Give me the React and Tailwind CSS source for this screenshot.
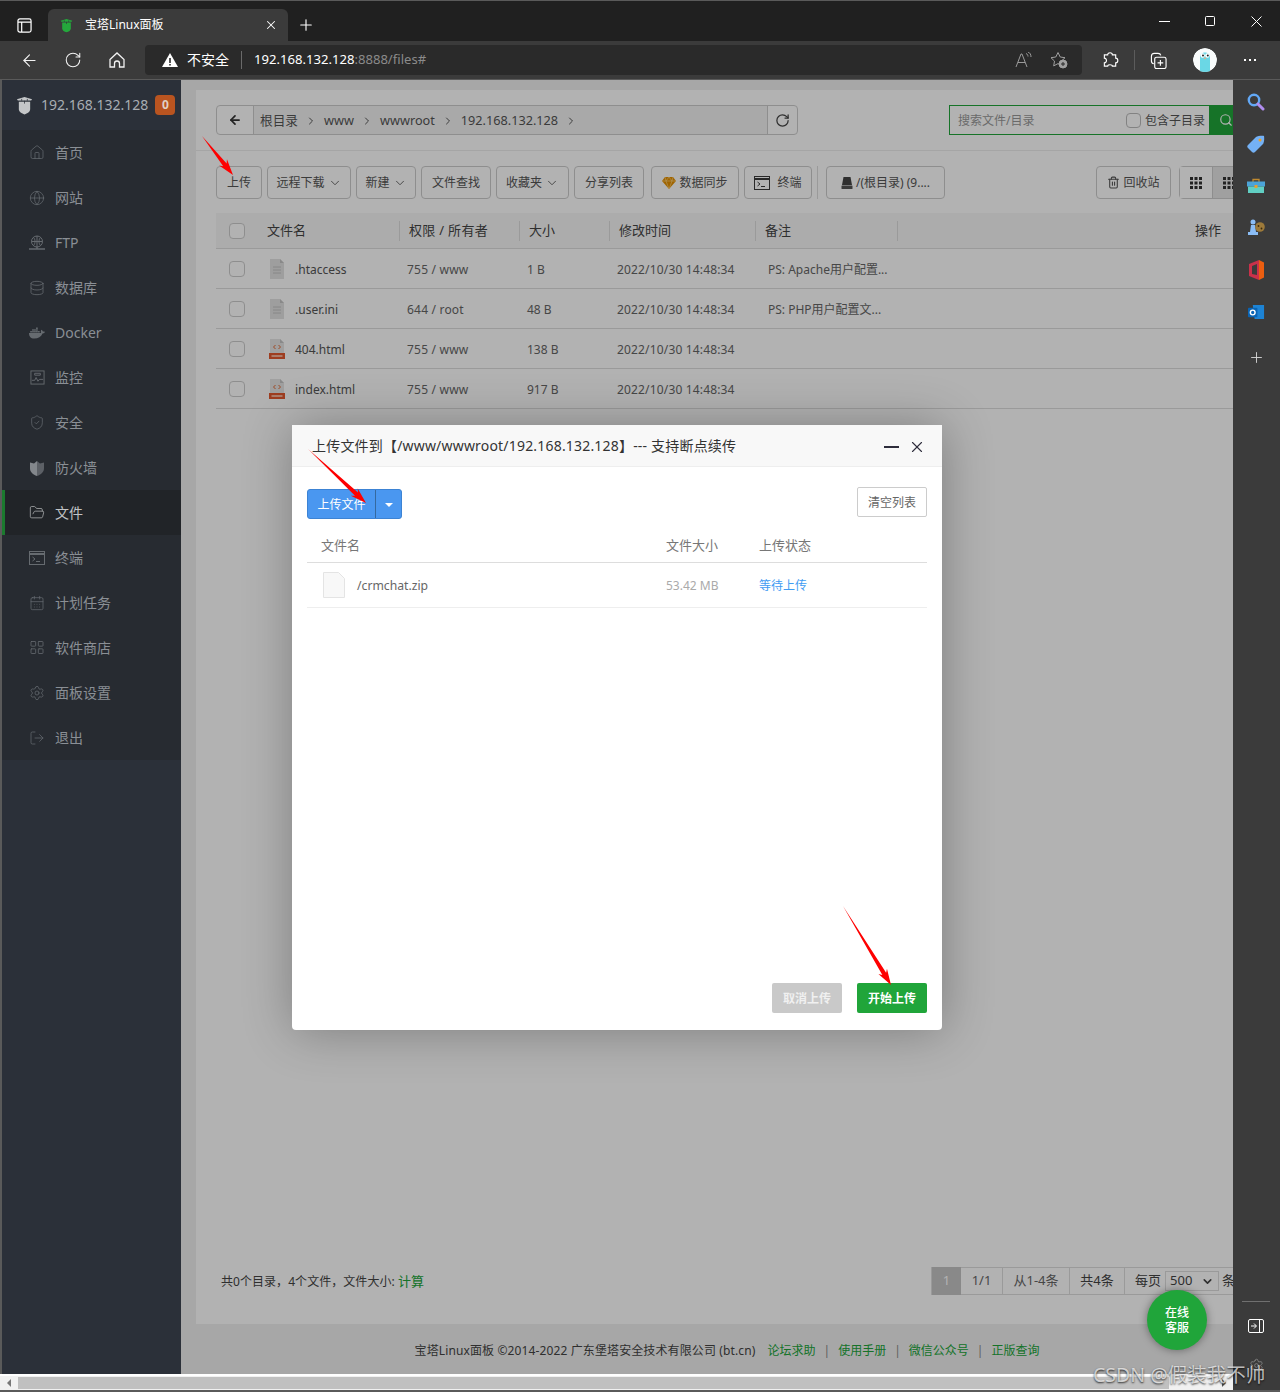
import {
  ArrowLeft,
  CalendarDays,
  ChevronDown,
  ChevronRight,
  Database,
  FolderOpen,
  Globe,
  Home,
  LayoutGrid,
  LogOut,
  Plus,
  RotateCw,
  Search,
  Settings,
  ShieldCheck,
  Trash2,
  X,
} from "lucide-react";
import { FaDocker } from "react-icons/fa";

/* small drawn icons */
const BtLogo = ({ className, color = "#c4c6c8" }) => (
  <svg viewBox="0 0 18 20" className={className}>
    <path d="M1 3.500 9 1l8 2.500-1 1.200H2z" fill={color} />
    <path d="M3 6h12v8c0 2.500-3 4.500-6 5.500-3-1-6-3-6-5.500z" fill={color} />
    <path d="M9 5v3M6 3v2M12 3v2" stroke="#2b3038" strokeWidth="0.8" />
  </svg>
);

const FtpIcon = () => (
  <svg viewBox="0 0 16 16" className="w-4 h-4" fill="none" stroke="currentColor" strokeWidth="1">
    <circle cx="8" cy="6.500" r="5.500" />
    <path d="M2.500 6.500h11M8 1v11M4.500 2.500c2 2 2 6 0 8M11.500 2.500c-2 2-2 6 0 8" />
    <path d="M0 14h16M8 12v2" strokeWidth="1.400" />
  </svg>
);

const MonitorIcon = () => (
  <svg viewBox="0 0 16 16" className="w-[15px] h-[15px]" fill="none" stroke="currentColor" strokeWidth="1">
    <rect x="1" y="1" width="14" height="14" />
    <path d="M2 11h3l1.500-3 2 4 1.500-2h4M5 3.500h6v2H5z" />
  </svg>
);

const FirewallIcon = () => (
  <svg viewBox="0 0 16 16" className="w-4 h-4">
    <path d="M1 2.500 5 3.500 8 1v15c-4-1.500-7-4-7-7.500z" fill="#83878c" />
    <path d="M15 2.500 11 3.500 8 1v15c4-1.500 7-4 7-7.500z" fill="#5c6066" />
  </svg>
);

const TerminalIcon = ({ className = "w-4 h-4" }) => (
  <svg viewBox="0 0 16 14" className={className} fill="none" stroke="currentColor">
    <rect x="0.500" y="0.500" width="15" height="13" />
    <path d="M1 3h14" strokeWidth="2" />
    <path d="M3.500 6 6 8 3.500 10M7 10.500h4" strokeWidth="1" />
  </svg>
);

const DocIcon = ({ html }) => (
  <svg viewBox="0 0 16 20" className="w-4 h-5">
    <path d="M1 0h10l4 4v16H1z" fill={html ? "#e6e6e6" : "#e3e3e3"} />
    <path d="M11 0l4 4h-4z" fill="#c5c5c5" />
    {html ? (
      <>
        <path d="M6.500 6 4.500 8l2 2M9.500 6l2 2-2 2" fill="none" stroke="#e36a35" strokeWidth="1" />
        <rect x="0" y="14" width="16" height="6" fill="#e3582e" />
        <rect x="2.500" y="16.300" width="11" height="1.400" fill="#ffd9c8" />
      </>
    ) : (
      <path d="M4 8h8M4 11h8M4 14h8" stroke="#c2c2c2" strokeWidth="1" />
    )}
  </svg>
);

const Diamond = () => (
  <svg viewBox="0 0 14 12" className="w-[14px] h-3">
    <path d="M3 0h8l3 4-7 8-7-8z" fill="#e49000" />
    <path d="M0 4h14M4 4l3 8 3-8M3 0l1 4 3-4 3 4 1-4" fill="none" stroke="#ffd27c" strokeWidth="0.7" />
  </svg>
);

const Gopher = () => (
  <svg viewBox="0 0 24 24" className="w-6 h-6 rounded-full">
    <circle cx="12" cy="12" r="12" fill="#f8fbfb" />
    <path d="M7 9c0-6 10-6 10 0v15H7z" fill="#6ad7e5" />
    <circle cx="9.600" cy="7.500" r="2.200" fill="#fff" />
    <circle cx="14.400" cy="7.500" r="2.200" fill="#fff" />
    <circle cx="10" cy="7.500" r="1" fill="#222" />
    <circle cx="14.800" cy="7.500" r="1" fill="#222" />
    <ellipse cx="12" cy="10.400" rx="1.200" ry="0.800" fill="#d6b28a" />
  </svg>
);

// the red arrows drawn over the screenshot
const Arrow = ({ from, to }) => {
  const dx = to[0] - from[0];
  const dy = to[1] - from[1];
  const len = Math.hypot(dx, dy);
  const ux = dx / len;
  const uy = dy / len;
  const at = (back, side) => `${to[0] - ux * back + uy * side},${to[1] - uy * back - ux * side}`;
  const points = [`${from[0]},${from[1]}`, at(13, 2.2), at(16, 5), to.join(","), at(16, -5), at(13, -2.2)].join(" ");
  return <polygon points={points} fill="#fe0000" />;
};

const menu = [
  { name: "首页", icon: <Home size={17} strokeWidth={1.1} /> },
  { name: "网站", icon: <Globe size={16} strokeWidth={1.1} /> },
  { name: "FTP", icon: <FtpIcon /> },
  { name: "数据库", icon: <Database size={16} strokeWidth={1.2} /> },
  { name: "Docker", icon: <FaDocker size={16} /> },
  { name: "监控", icon: <MonitorIcon /> },
  { name: "安全", icon: <ShieldCheck size={17} strokeWidth={1.1} /> },
  { name: "防火墙", icon: <FirewallIcon /> },
  { name: "文件", icon: <FolderOpen size={17} strokeWidth={1.1} />, active: true },
  { name: "终端", icon: <TerminalIcon /> },
  { name: "计划任务", icon: <CalendarDays size={16} strokeWidth={1.1} /> },
  { name: "软件商店", icon: <LayoutGrid size={17} strokeWidth={1.2} /> },
  { name: "面板设置", icon: <Settings size={16} strokeWidth={1.1} /> },
  { name: "退出", icon: <LogOut size={16} strokeWidth={1.1} /> },
];

const files = [
  { name: ".htaccess", perm: "755 / www", size: "1 B", note: "PS: Apache用户配置..." },
  { name: ".user.ini", perm: "644 / root", size: "48 B", note: "PS: PHP用户配置文..." },
  { name: "404.html", perm: "755 / www", size: "138 B", html: true },
  { name: "index.html", perm: "755 / www", size: "917 B", html: true },
];

const Sidebar = () => (
  <aside className="w-[181px] shrink-0 bg-[#2b3039] flex flex-col border-l-2 border-[#5a5a5a]">
    <div className="h-[50px] flex items-center pl-[14px] text-[#a8adb3]">
      <BtLogo className="w-[17px] h-[19px] mr-2" />
      <span className="text-[14px] pb-[2px]">192.168.132.128</span>
      <span className="ml-[7px] w-5 h-5 rounded bg-[#b95420] text-[12px] font-bold text-[#e0d0c5] flex items-center justify-center">
        0
      </span>
    </div>
    <nav className="bg-[#272b31]">
      {menu.map((m) => (
        <div
          key={m.name}
          className={
            m.active
              ? "h-[45px] flex items-center pl-[24px] text-[14px] bg-[#212428] text-[#c2c4c6] border-l-[3px] border-[#1b7a2e]"
              : "h-[45px] flex items-center pl-[27px] text-[14px] text-[#8a8f95]"
          }
        >
          <span className={m.active ? "w-4 flex justify-center mr-[10px] text-[#b4b6b8]" : "w-4 flex justify-center mr-[10px] text-[#666b70]"}>
            {m.icon}
          </span>
          {m.name}
        </div>
      ))}
    </nav>
  </aside>
);

const ToolButton = ({ children, width, className = "" }) => (
  <div
    style={{ width }}
    className={`h-[33px] shrink-0 bg-white border border-[#ccc] rounded-sm flex items-center justify-center gap-[3px] text-[12px] text-[#555] ${className}`}
  >
    {children}
  </div>
);

const FileTable = () => (
  <div className="mt-[14px] text-[#666]">
    <div className="h-[36px] bg-[#f6f6f6] border-b border-[#ddd] grid grid-cols-[183px_120px_90px_146px_142px_1fr] items-center text-[13px] text-[#444]">
      <div className="flex items-center pl-[13px]">
        <span className="w-4 h-4 bg-white border border-[#ccc] rounded-sm" />
        <span className="ml-[22px]">文件名</span>
      </div>
      <div className="h-5 border-l border-[#ddd] pl-[9px] flex items-center tracking-[0.3px]">权限 / 所有者</div>
      <div className="h-5 border-l border-[#ddd] pl-[9px] flex items-center">大小</div>
      <div className="h-5 border-l border-[#ddd] pl-[9px] flex items-center">修改时间</div>
      <div className="h-5 border-l border-[#ddd] pl-[9px] flex items-center">备注</div>
      <div className="h-5 border-l border-[#ddd] pr-[32px] flex items-center justify-end">操作</div>
    </div>
    {files.map((f) => (
      <div
        key={f.name}
        className="h-10 border-b border-[#ddd] grid grid-cols-[183px_120px_90px_146px_142px_1fr] items-center text-[12px]"
      >
        <div className="flex items-center pl-[13px]">
          <span className="w-4 h-4 bg-white border border-[#ccc] rounded-sm" />
          <span className="ml-[24px] mr-[10px] flex">
            <DocIcon html={f.html} />
          </span>
          <span className="text-[#555] pt-[2px]">{f.name}</span>
        </div>
        <div className="pl-2 pt-[2px] tracking-[0.2px]">{f.perm}</div>
        <div className="pl-2 pt-[2px]">{f.size}</div>
        <div className="pl-2 pt-[2px] tracking-[0.16px]">2022/10/30 14:48:34</div>
        <div className="pl-[13px] pt-[2px]">{f.note}</div>
      </div>
    ))}
  </div>
);

const Toolbar = () => (
  <div className="mt-[15px] flex items-center gap-[5px]">
    <ToolButton width={46}>上传</ToolButton>
    <ToolButton width={84}>
      远程下载
      <ChevronDown size={14} strokeWidth={1.5} />
    </ToolButton>
    <ToolButton width={60}>
      新建
      <ChevronDown size={14} strokeWidth={1.5} />
    </ToolButton>
    <ToolButton width={70}>文件查找</ToolButton>
    <ToolButton width={73}>
      收藏夹
      <ChevronDown size={14} strokeWidth={1.5} />
    </ToolButton>
    <ToolButton width={70}>分享列表</ToolButton>
    <ToolButton width={88} className="ml-[2px]">
      <Diamond />
      数据同步
    </ToolButton>
    <ToolButton width={68}>
      <span className="text-[#3c3c3c] mr-1 flex">
        <TerminalIcon />
      </span>
      终端
    </ToolButton>
    <div className="w-px h-[33px] bg-[#ddd]" />
    <ToolButton width={119} className="ml-[3px]">
      <svg viewBox="0 0 12 12" className="w-3 h-3">
        <path d="M2.500 0h7L11 8H1z" fill="#444" />
        <rect x="0.500" y="8.500" width="11" height="3.500" rx="0.500" fill="#555" />
      </svg>
      /(根目录) (9....
    </ToolButton>
    <div className="flex-1" />
    <ToolButton width={75}>
      <Trash2 size={13} />
      回收站
    </ToolButton>
    <div className="ml-[3px] mr-[8px] flex h-[33px] border border-[#ccc] rounded-sm shrink-0">
      <div className="w-[32px] bg-white flex items-center justify-center text-[#333]">
        <svg viewBox="0 0 12 12" className="w-3 h-3" fill="currentColor">
          <path d="M0 0h3v3H0zM4.500 0h3v3h-3zM9 0h3v3H9zM0 4.500h3v3H0zM4.500 4.500h3v3h-3zM9 4.500h3v3H9zM0 9h3v3H0zM4.500 9h3v3h-3zM9 9h3v3H9z" />
        </svg>
      </div>
      <div className="w-[32px] bg-[#e6e6e6] border-l border-[#ccc] flex items-center justify-center text-[#333]">
        <svg viewBox="0 0 12 12" className="w-3 h-3" fill="currentColor">
          <path d="M0 0h3v3H0zM4.500 0h3v3h-3zM9 0h3v3H9zM0 4.500h3v3H0zM4.500 4.500h3v3h-3zM9 4.500h3v3H9zM0 9h3v3H0zM4.500 9h3v3h-3zM9 9h3v3H9z" />
        </svg>
      </div>
    </div>
  </div>
);

const PathBar = () => (
  <div className="flex items-center justify-between pr-[3px]">
    <div className="w-[582px] h-[30px] flex bg-white border border-[#ccc] rounded-sm text-[12.700px] text-[#555]">
      <div className="w-[37px] flex items-center justify-center border-r border-[#ccc] text-[#333]">
        <ArrowLeft size={14} strokeWidth={3} />
      </div>
      <div className="flex-1 bg-[#f3f3f3] flex items-center pl-[6px] pt-px">
        根目录
        <ChevronRight size={12} className="mx-[7px]" />
        www
        <ChevronRight size={12} className="mx-[7px]" />
        wwwroot
        <ChevronRight size={12} className="mx-[7px]" />
        192.168.132.128
        <ChevronRight size={12} className="mx-[7px]" />
      </div>
      <div className="w-[30px] border-l border-[#ccc] flex items-center justify-center text-[#444]">
        <RotateCw size={15} />
      </div>
    </div>
    <div className="w-[301px] h-[30px] flex border border-[#20a53a] bg-white text-[12px] overflow-hidden">
      <div className="flex-1 flex items-center pl-2 pt-px text-[#999]">搜索文件/目录</div>
      <div className="flex items-center text-[#555] pr-1 pt-px">
        <span className="w-[15px] h-[15px] border border-[#bbb] rounded-sm mr-1" />
        包含子目录
      </div>
      <div className="w-10 bg-[#20a53a] flex items-center pl-[10px] text-white">
        <Search size={14} />
      </div>
    </div>
  </div>
);

const Pager = () => (
  <div className="h-[28px] flex text-[13px] text-[#666] border border-[#ddd] bg-white">
    <div className="w-[29px] bg-[#c4c4c4] text-white flex items-center justify-center -my-px">1</div>
    <div className="w-[42px] border-r border-[#ddd] flex items-center justify-center">1/1</div>
    <div className="w-[67px] border-r border-[#ddd] flex items-center justify-center">从1-4条</div>
    <div className="w-[55px] border-r border-[#ddd] flex items-center justify-center text-[#444]">共4条</div>
    <div className="flex items-center pl-[10px] text-[#444]">
      每页
      <div className="ml-[4px] w-[54px] h-[20px] border border-[#ddd] flex items-center justify-between pl-1 pr-1">
        500
        <ChevronDown size={13} strokeWidth={3} />
      </div>
      <span className="ml-[3px] mr-1">条</span>
    </div>
  </div>
);

const UploadDialog = () => (
  <div className="absolute left-[111px] top-[345px] w-[650px] h-[605px] bg-white rounded-sm shadow-[1px_1px_50px_rgba(0,0,0,0.3)] flex flex-col">
    <div className="h-[42px] bg-[#f8f8f8] border-b border-[#eee] flex items-center pl-[20px] pr-[16px] text-[14px] text-[#333]">
      <span className="flex-1 tracking-[0.19px]">上传文件到【/www/wwwroot/192.168.132.128】--- 支持断点续传</span>
      <span className="w-[15px] h-[2px] bg-[#2e2d3c] mt-[3px] mr-[9px]" />
      <X size={18} strokeWidth={1.5} className="text-[#2e2d3c] mt-[2px]" />
    </div>
    <div className="flex-1 px-[15px] flex flex-col">
      <div className="flex justify-between mt-[20px]">
        <div className="mt-[2px] w-[95px] h-[30px] bg-[#4a97f0] border border-[#3c83d4] rounded-[3px] flex text-white text-[12px]">
          <div className="w-[68px] flex items-center justify-center pt-[2px] border-r border-[#35699f]">上传文件</div>
          <div className="flex-1 flex items-center justify-center">
            <span className="border-x-[4px] border-t-[4px] border-x-transparent border-t-white mt-[2px]" />
          </div>
        </div>
        <div className="w-[70px] h-[30px] border border-[#ccc] rounded-[2px] flex items-center justify-center pt-[2px] text-[12px] text-[#666]">
          清空列表
        </div>
      </div>
      <div className="mt-[11px] h-[33px] border-b border-[#ddd] flex items-center text-[13px] text-[#777]">
        <span className="ml-[14px] w-[345px]">文件名</span>
        <span className="w-[93px]">文件大小</span>
        <span>上传状态</span>
      </div>
      <div className="h-[45px] border-b border-[#eee] flex items-center">
        <svg viewBox="0 0 22 26" className="ml-[16px] w-[22px] h-[26px]">
          <path d="M.5.500h15l6 6v19H.5z" fill="#f8f8f8" stroke="#e4e4e4" />
        </svg>
        <span className="ml-[12px] w-[309px] pt-[2px] text-[12.200px] text-[#666]">/crmchat.zip</span>
        <span className="w-[93px] pt-[2px] text-[12px] text-[#aaa]">53.42 MB</span>
        <span className="pt-[2px] text-[12px] text-[#3f9cf2]">等待上传</span>
      </div>
      <div className="flex-1" />
      <div className="flex justify-end gap-[15px] mb-[17px] text-[12px] font-bold text-white">
        <div className="w-[70px] h-[30px] pt-[2px] bg-[#c9c9c9] text-[#f0f0f0] rounded-[2px] flex items-center justify-center">取消上传</div>
        <div className="w-[70px] h-[30px] pt-[2px] bg-[#20a53a] rounded-[2px] flex items-center justify-center">开始上传</div>
      </div>
    </div>
  </div>
);

const Main = () => (
  <main className="w-[1052px] shrink-0 relative overflow-hidden bg-[#f0f0f0]">
    <div className="w-[1092px] pl-[15px] pt-[10px]">
      <div className="h-[1234px] bg-white px-5 pt-[15px] flex flex-col">
        <PathBar />
        <div className="h-px bg-[#ececec] -mx-5 mt-[15px]" />
        <Toolbar />
        <FileTable />
        <div className="flex-1" />
        <div className="flex items-center justify-between mb-[29px]">
          <span className="text-[12px] text-[#444] pl-[5px] pt-[2px] tracking-[0.05px]">
            共0个目录，4个文件，文件大小: <span className="text-[#20a53a] text-[13px]">计算</span>
          </span>
          <div className="w-[322px] overflow-hidden">
            <Pager />
          </div>
        </div>
      </div>
      <div className="mt-[18px] text-center text-[12px] text-[#444] -ml-[15px]">
        <span className="tracking-[0.12px]">宝塔Linux面板 ©2014-2022 广东堡塔安全技术有限公司 (bt.cn)</span>
        <span className="text-[#20a53a] ml-[12px]">论坛求助</span>
        <span className="mx-[8px] text-[#888]">|</span>
        <span className="text-[#20a53a]">使用手册</span>
        <span className="mx-[8px] text-[#888]">|</span>
        <span className="text-[#20a53a]">微信公众号</span>
        <span className="mx-[8px] text-[#888]">|</span>
        <span className="text-[#20a53a]">正版查询</span>
      </div>
    </div>
    <div className="absolute inset-0 bg-black/30" />
    <UploadDialog />
    <div className="absolute left-[966px] top-[1210px] w-[60px] h-[60px] rounded-full bg-[#20a53a] shadow-[0_0_8px_rgba(0,0,0,0.4)] text-white text-[12px] font-medium leading-[15px] flex items-center justify-center text-center">
      在线
      <br />
      客服
    </div>
  </main>
);

const EdgeSidebar = () => (
  <aside className="flex-1 bg-[#3b3b3b] flex flex-col items-center pt-[13px] pr-px">
    <svg viewBox="0 0 18 18" className="w-[18px] h-[18px]">
      <circle cx="7" cy="7" r="5.200" fill="none" stroke="#62a8f5" strokeWidth="2.400" />
      <path d="M11 11l5 5" stroke="#b18df0" strokeWidth="3" strokeLinecap="round" />
    </svg>
    <svg viewBox="0 0 18 18" className="w-[18px] h-[18px] mt-6">
      <path d="M1 10 9 2c1-1 7-1.500 8-1 .5 2 0 7-1 8l-8 8c-1 1-2 1-3 0l-4-4c-1-1-1-2 0-3z" fill="#74b1f5" />
      <circle cx="13" cy="5" r="1.500" fill="#f0a020" />
    </svg>
    <svg viewBox="0 0 18 16" className="w-[18px] h-4 mt-[25px]">
      <path d="M6 4V1.500h6V4" fill="none" stroke="#c08a30" strokeWidth="1.300" />
      <rect y="3.500" width="18" height="5" fill="#4ca3d8" />
      <rect x="1" y="8.500" width="16" height="6.500" fill="#61cfc3" />
      <rect x="7.500" y="7" width="3" height="3" fill="#e8a030" />
    </svg>
    <svg viewBox="0 0 18 18" className="w-[18px] h-[18px] mt-6">
      <circle cx="6" cy="4" r="2.500" fill="#8bbdf5" />
      <path d="M4 7h4l1 7h2v3H1v-3h2z" fill="#8bbdf5" />
      <circle cx="13" cy="9" r="4.800" fill="#9d7a3a" />
      <circle cx="11.500" cy="8" r="0.900" fill="#3a2a10" />
      <circle cx="14.500" cy="10.500" r="0.900" fill="#3a2a10" />
    </svg>
    <svg viewBox="0 0 16 20" className="w-4 h-5 mt-[24px]">
      <path d="M1 4 11 0v20L1 16z" fill="#c9314a" />
      <path d="M11 0l5 2.500v15L11 20z" fill="#eb5e10" />
      <path d="M4 6l5-2v11l-5-1z" fill="#3b3b3b" />
    </svg>
    <svg viewBox="0 0 18 18" className="w-[17px] h-[17px] mt-[24px]">
      <path d="M5 1h12v15H7z" fill="#1d83d4" />
      <rect y="4" width="10" height="10" rx="1" fill="#0a64b4" />
      <circle cx="5" cy="9" r="2.500" fill="none" stroke="#fff" strokeWidth="1.500" />
    </svg>
    <Plus size={17} strokeWidth={1.300} className="text-[#d5d5d5] mt-[28px]" />
    <div className="flex-1" />
    <div className="w-7 h-px bg-[#707070]" />
    <svg viewBox="0 0 16 14" className="w-4 h-[14px] mt-[17px] text-white" fill="none" stroke="currentColor">
      <rect x="0.500" y="0.500" width="15" height="13" rx="1.500" />
      <path d="M11.500 1v12M3 7h5M6 4.500 8.500 7 6 9.500" />
    </svg>
    <Settings size={15} strokeWidth={1} className="text-[#a0a0a0] mt-[25px] mb-px" />
  </aside>
);

const BrowserChrome = () => (
  <>
    <div className="h-[41px] shrink-0 bg-[#202020] border-t border-[#5a5a5a] flex items-end text-white">
      <div className="w-[48px] h-[32px] flex items-center justify-center">
        <svg viewBox="0 0 16 16" className="w-[15px] h-[15px]" fill="none" stroke="currentColor" strokeWidth="1.300">
          <rect x="1" y="1" width="14" height="14" rx="2" />
          <path d="M1 4.500h14M5 4.500V15" />
        </svg>
      </div>
      <div className="w-[240px] h-[32px] rounded-t-md bg-[#3b3b3b] flex items-center pl-[12px] pr-[10px] text-[12px]">
        <BtLogo className="w-[13px] h-[15px] mr-[12px]" color="#24a83c" />
        <span className="flex-1">宝塔Linux面板</span>
        <X size={14} strokeWidth={1.8} />
      </div>
      <div className="h-[32px] ml-[9px] flex items-center">
        <Plus size={18} strokeWidth={1.500} />
      </div>
      <div className="flex-1" />
      <div className="h-10 self-start flex items-center pr-[18px]">
        <svg viewBox="0 0 11 11" className="w-[11px] h-[11px]" stroke="currentColor">
          <path d="M0 5.500h11" />
        </svg>
        <svg viewBox="0 0 10 10" className="w-[10px] h-[10px] ml-[35px]" fill="none" stroke="currentColor">
          <rect x="0.500" y="0.500" width="9" height="9" rx="1" />
        </svg>
        <svg viewBox="0 0 11 11" className="w-[11px] h-[11px] ml-[36px]" stroke="currentColor">
          <path d="M.5.500l10 10M10.500.500l-10 10" />
        </svg>
      </div>
    </div>
    <div className="h-[38px] shrink-0 bg-[#3b3b3b] flex items-center text-white">
      <div className="w-[145px] flex items-center pl-[20px] text-[#f2f2f2]">
        <ArrowLeft size={19} strokeWidth={1.400} />
        <RotateCw size={18} strokeWidth={1.400} className="ml-[25px]" />
        <svg viewBox="0 0 18 18" className="w-[18px] h-[18px] ml-[26px]" fill="none" stroke="currentColor" strokeWidth="1.300">
          <path d="M2 8.500 9 2l7 6.500V16h-4.500v-3.500a2.500 2.500 0 0 0-5 0V16H2z" />
        </svg>
      </div>
      <div className="w-[937px] h-[30px] rounded bg-[#2a2a2a] flex items-center pl-[17px] pr-[14px] text-[14px]">
        <svg viewBox="0 0 16 14" className="w-4 h-[14px] mr-[9px]">
          <path d="M8 0l8 14H0z" fill="#fff" />
          <path d="M7.200 5h1.600v5H7.200zM7.200 11h1.600v1.500H7.200z" fill="#2a2a2a" />
        </svg>
        <span className="pb-px">不安全</span>
        <span className="w-px h-[18px] bg-[#6a6a6a] mx-[12px]" />
        <span className="text-[13.100px]">
          192.168.132.128<span className="text-[#8b8b8b]">:8888/files#</span>
        </span>
        <span className="flex-1" />
        <svg viewBox="0 0 18 16" className="w-[18px] h-4 mr-[17px] text-[#9a9a9a]" fill="none" stroke="currentColor">
          <path d="M1 15 6 2h1l5 13M3 10.500h7" />
          <path d="M11 1.500c1.500.5 2 2 2 3M13 0c2 .8 3 2.500 3 5" />
        </svg>
        <svg viewBox="0 0 18 18" className="w-[18px] h-[18px] text-[#a0a0a0]" fill="none" stroke="currentColor">
          <path d="M8 1.500l2.200 4.500 4.800.7-3.500 3.400.8 4.800L8 12.600l-4.300 2.300.8-4.800L1 6.700l4.800-.7z" />
          <circle cx="13" cy="13" r="4" fill="#a0a0a0" />
          <path d="M13 11v4M11 13h4" stroke="#2a2a2a" />
        </svg>
      </div>
      <div className="flex-1 flex items-center pl-[20px]">
        <svg viewBox="0 0 18 18" className="w-[17px] h-[17px]" fill="none" stroke="currentColor" strokeWidth="1.200">
          <path d="M6 3c0-3 5-3 5 0h3.500v3.500c3 0 3 5 0 5V15H11c0-2-5-2-5 0H2.500v-3.500c3 0 3-5 0-5V3z" />
        </svg>
        <span className="w-px h-5 bg-[#5c5c5c] ml-[15px] mr-[15px]" />
        <svg viewBox="0 0 18 18" className="w-[17px] h-[17px]" fill="none" stroke="currentColor" strokeWidth="1.200">
          <path d="M4 12.500C2 12 1.500 11 1.500 9.500v-5c0-2 1-3 3-3h4c1.500 0 2.500.5 3 2" />
          <rect x="5" y="5.500" width="12" height="12" rx="2" />
          <path d="M11 8.500v6M8 11.500h6" />
        </svg>
        <span className="ml-[26px] flex">
          <Gopher />
        </span>
        <span className="ml-[27px] flex gap-[3px]">
          <span className="w-[2px] h-[2px] bg-white" />
          <span className="w-[2px] h-[2px] bg-white" />
          <span className="w-[2px] h-[2px] bg-white" />
        </span>
      </div>
    </div>
  </>
);

const ScrollBar = () => (
  <div className="h-[18px] shrink-0 flex flex-col border-b-2 border-[#5a5a5a]">
    <div className="flex-1 flex bg-[#f1f1f1] border-t-2 border-white mr-[47px]">
      <div className="w-[18px] flex items-center justify-center">
        <span className="border-y-[4px] border-r-[4px] border-y-transparent border-r-[#777]" />
      </div>
      <div className="w-[1151px] bg-[#c0c0c0] my-px" />
      <div className="flex-1 flex items-center justify-end pr-[7px]">
        <span className="border-y-[4px] border-l-[4px] border-y-transparent border-l-[#555]" />
      </div>
    </div>
  </div>
);

export default function App() {
  return (
    <div className="relative w-[1280px] h-[1392px] overflow-hidden bg-[#3b3b3b] flex flex-col font-['Noto_Sans','Noto_Sans_CJK_SC',sans-serif]">
      <BrowserChrome />
      <div className="h-px shrink-0 bg-[#5a5a5a]" />
      <div className="flex-1 min-h-0 flex">
        <Sidebar />
        <Main />
        <EdgeSidebar />
      </div>
      <ScrollBar />
      <svg className="absolute inset-0 w-[1280px] h-[1392px] pointer-events-none">
        <Arrow from={[202, 136]} to={[233, 175]} />
        <Arrow from={[308, 449]} to={[366, 503]} />
        <Arrow from={[843, 906]} to={[891, 985]} />
      </svg>
      <div className="absolute left-[1093px] top-[1360px] text-[19.500px] text-white/70 [text-shadow:0_1px_2px_rgba(0,0,0,0.8)] whitespace-nowrap">
        CSDN @假装我不帅
      </div>
    </div>
  );
}
